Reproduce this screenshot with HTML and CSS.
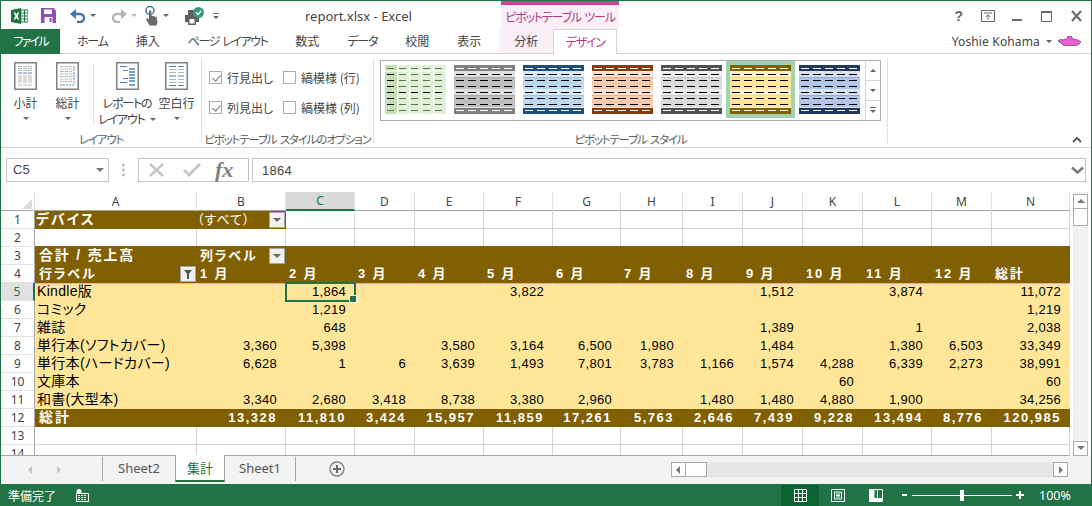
FILE: index.html
```html
<!DOCTYPE html>
<html lang="ja">
<head>
  <meta charset="UTF-8" />
  <title>report.xlsx - Excel</title>
  <link rel="stylesheet" href="styles.css">
</head>
<body>
<div class="window">

  <!-- Title bar -->
  <div class="title-bar">
    <div class="qat">
      <svg class="q-logo" width="17" height="16" viewBox="0 0 17 16"><path d="M0 2l10-2v16L0 14z" fill="#217346"/><path d="M10 2h7v12h-7z" fill="#fff" stroke="#217346"/><path d="M11 5h5M11 8h5M11 11h5M13.500 2v12" stroke="#217346" fill="none"/><path d="M2.500 4.500h2l1 2 1-2h1.800L6.500 8l1.800 3.500H6.400L5.400 9.500l-1 2H2.600L4.500 8z" fill="#fff"/></svg>
      <svg class="q-save" width="15" height="15" viewBox="0 0 15 15"><path d="M0 0h12.500L15 2.500V15H0z" fill="#8f4fb5"/><path d="M3 1.500h8v4.500H3z" fill="#fff"/><path d="M3.500 9h8v6h-8z" fill="#fff"/><path d="M8.500 10h2v4h-2z" fill="#8f4fb5"/></svg>
      <svg class="q-undo" width="16" height="15" viewBox="0 0 16 15"><path d="M2 6h8a4 4 0 0 1 0 8H7" fill="none" stroke="#3f74ac" stroke-width="2.400"/><path d="M6 1v10L0 6z" fill="#3f74ac"/></svg>
      <span class="caret q-c1"></span>
      <svg class="q-redo" width="16" height="15" viewBox="0 0 16 15"><path d="M14 6H6a4 4 0 0 0 0 8h3" fill="none" stroke="#b4b4b4" stroke-width="2.400"/><path d="M10 1v10l6-5z" fill="#b4b4b4"/></svg>
      <span class="caret q-c2 light"></span>
      <svg class="q-touch" width="14" height="20" viewBox="0 0 14 20"><circle cx="5" cy="4.500" r="4" fill="none" stroke="#3f74ac" stroke-width="1.500"/><path d="M4 4.500h2.200v5l5.300 1.500 1 5-1 3.500H4.500L1 13l1-1 2 1.500z" fill="#6a6a6a"/></svg>
      <span class="caret q-c3"></span>
      <svg class="q-print" width="21" height="18" viewBox="0 0 21 18"><path d="M1 8h3V3h8v5h3v7h-3v3H4v-3H1z" fill="#5f5f5f"/><path d="M5.500 12h5v4.500h-5z" fill="#fff"/><circle cx="14.500" cy="5.500" r="5.500" fill="#3b9a7a"/><path d="M12 5.500l2 2 3-3.500" fill="none" stroke="#fff" stroke-width="1.300"/></svg>
      <span class="q-more"></span>
    </div>
    <div class="doc-title">report.xlsx - Excel</div>
    <div class="tool-title kana">ピボットテーブル ツール</div>
    <div class="win-btns">
      <span class="help">?</span>
      <svg class="w-restore" width="14" height="12" viewBox="0 0 14 12"><path d="M.5.500h13v11H.5z" fill="none" stroke="#6a6a6a"/><path d="M3 3h8" stroke="#6a6a6a"/><path d="M7 10V5M4.800 7L7 4.700 9.200 7" fill="none" stroke="#6a6a6a"/></svg>
      <svg width="10" height="12" viewBox="0 0 10 12"><path d="M0 9h10v2H0z" fill="#6a6a6a"/></svg>
      <svg width="11" height="12" viewBox="0 0 11 12"><path d="M.5 1.500h10v10H.5z" fill="none" stroke="#6a6a6a"/><path d="M0 1h11v2H0z" fill="#6a6a6a"/></svg>
      <svg width="11" height="12" viewBox="0 0 11 12"><path d="M1 1l9 10M10 1L1 11" stroke="#6a6a6a" stroke-width="2" fill="none"/></svg>
    </div>
  </div>

  <!-- Tabs -->
  <div class="tab-bar">
    <div class="tab file">ファイル</div>
    <div class="tab first kana">ホーム</div>
    <div class="tab">挿入</div>
    <div class="tab kana page-tab">ページ レイアウト</div>
    <div class="tab">数式</div>
    <div class="tab kana">データ</div>
    <div class="tab">校閲</div>
    <div class="tab">表示</div>
    <div class="tool-tabs">
      <div class="tab tool">分析</div>
      <div class="tab design kana">デザイン</div>
    </div>
    <div class="account">
      <span class="acct-name">Yoshie Kohama</span>
      <span class="caret"></span>
      <svg width="23" height="10" viewBox="0 0 23 10"><path d="M0 5l3-2 1 1 5-1 1-3h3l2 3 5 1 3 2-3 3-5 1H6L3 7z" fill="#e85fd8" stroke="#333" stroke-width=".6"/></svg>
    </div>
  </div>

  <!-- Ribbon -->
  <div class="ribbon">
    <div class="group g-layout">
      <div class="group-body">
        <div class="rb-btn w-a">
          <svg class="rb-icon" width="23" height="28" viewBox="0 0 23 28"><use href="#frame"/><path d="M4 4.500h15M4 6.500h15M4 8.500h15" stroke="#b5b5b5" stroke-dasharray="4 1" fill="none"/><path d="M4 11h15" stroke="#4a83c0" stroke-dasharray="4 1" fill="none"/><path d="M4 14h15M4 16h15M4 18h15M4 20h15M4 23h15" stroke="#b5b5b5" stroke-dasharray="4 1" fill="none"/></svg>
          <span class="rb-label">小計</span><span class="caret"></span>
        </div>
        <div class="rb-btn w-b">
          <svg class="rb-icon" width="23" height="28" viewBox="0 0 23 28"><use href="#frame"/><path d="M4 4.500h12M4 7h12M4 9.500h12M4 12h12M4 14.500h12M4 17h12M4 19.500h12" stroke="#b5b5b5" stroke-dasharray="3.500 1" fill="none"/><path d="M18 4v18M4 23h15" stroke="#4a83c0" stroke-dasharray="2 1" fill="none"/></svg>
          <span class="rb-label">総計</span><span class="caret"></span>
        </div>
        <div class="rb-sep"></div>
        <div class="rb-btn w-c">
          <svg class="rb-icon" width="23" height="28" viewBox="0 0 23 28"><use href="#frame"/><path d="M4 4.500h7M7 8.500h5M7 16.500h5M4 20.500h7" stroke="#4a83c0" fill="none"/><path d="M13 7h6M13 10h6M13 13h6M13 16h6M13 19h6M13 23h6" stroke="#4a83c0" stroke-width="1.500" fill="none"/></svg>
          <span class="rb-label kana">レポートの<br>レイアウト<i class="caret inline"></i></span>
        </div>
        <div class="rb-btn w-d">
          <svg class="rb-icon" width="23" height="28" viewBox="0 0 23 28"><use href="#frame"/><path d="M4 4.500h7M13 4.500h6M4 14h7M13 14h6M4 23.500h7M13 23.500h6" stroke="#4a83c0" fill="none"/><path d="M4 7.500h7M13 7.500h6M4 10.500h7M13 10.500h6M4 17.500h7M13 17.500h6M4 20.500h7M13 20.500h6" stroke="#b5b5b5" fill="none"/></svg>
          <span class="rb-label">空白行</span><span class="caret"></span>
        </div>
      </div>
      <div class="group-label kana">レイアウト</div>
    </div>

    <div class="group g-options">
      <div class="group-body">
        <div class="opt-grid">
          <label class="opt"><span class="check on"></span>行見出し</label>
          <label class="opt"><span class="check"></span>縞模様 (行)</label>
          <label class="opt"><span class="check on"></span>列見出し</label>
          <label class="opt"><span class="check"></span>縞模様 (列)</label>
        </div>
      </div>
      <div class="group-label kana">ピボットテーブル スタイルのオプション</div>
    </div>

    <div class="group g-styles">
      <div class="group-body">
        <div class="gallery">
          <div class="swatches">
            <svg class="swatch" width="61" height="49" viewBox="0 0 61 49"><path d="M0 0h61v49H0z" fill="#e2efda"/><path d="M0 0h12v49H0z" fill="#c6e0b4"/><path d="M0 6h61" stroke="#fff" fill="none"/><path d="M12.500 0v49M24.500 0v49M36.500 0v49M48.500 0v49" stroke="#fff" fill="none"/><path d="M2 3.500h58" stroke="#548235" stroke-dasharray="7 5" fill="none"/><path d="M2 9.500h7M2 15.500h7M2 21.500h7M2 27.500h58M2 33.500h7M2 39.500h7" stroke="#000" stroke-dasharray="7 5" fill="none"/><path d="M14 9.500h46M14 15.500h46M14 21.500h46M14 33.500h46M14 39.500h46M2 45.500h58" stroke="#548235" stroke-dasharray="7 5" fill="none"/></svg>
            <svg class="swatch sw-gray" width="61" height="49"><use href="#style"/></svg>
            <svg class="swatch sw-blue" width="61" height="49"><use href="#style"/></svg>
            <svg class="swatch sw-orange" width="61" height="49"><use href="#style"/></svg>
            <svg class="swatch sw-dark" width="61" height="49"><use href="#style"/></svg>
            <svg class="swatch sw-gold picked" width="61" height="49"><use href="#style"/></svg>
            <svg class="swatch sw-navy" width="61" height="49"><use href="#style"/></svg>
          </div>
          <div class="gallery-scroll">
            <span class="up"></span>
            <span class="down"></span>
            <span class="more"></span>
          </div>
        </div>
      </div>
      <div class="group-label kana">ピボットテーブル スタイル</div>
    </div>
    <div class="ribbon-end">
      <svg width="10" height="7" viewBox="0 0 10 7"><path d="M1 6l4-4 4 4" fill="none" stroke="#555" stroke-width="1.800"/></svg>
    </div>
  </div>

  <!-- Formula bar -->
  <div class="formula-bar">
    <div class="name-box">C5<span class="name-arrow"></span></div>
    <div class="dots"></div>
    <div class="fx-box">
      <svg width="15" height="14" viewBox="0 0 15 14"><path d="M1 1l13 12M14 1L1 13" stroke="#c6c6c6" stroke-width="2.400" fill="none"/></svg>
      <svg width="18" height="14" viewBox="0 0 18 14"><path d="M1 7l5 5L17 1" stroke="#c6c6c6" stroke-width="3" fill="none"/></svg>
      <span class="fx">fx</span>
    </div>
    <div class="formula-input">
      <span>1864</span>
      <svg width="13" height="9" viewBox="0 0 13 9"><path d="M1 1.500l5.500 5 5.500-5" fill="none" stroke="#7a7a7a" stroke-width="2.600"/></svg>
    </div>
  </div>

  <!-- Sheet -->
  <div class="sheet-area">
    <div class="grid-wrap">
      <table class="grid">
        <colgroup>
          <col class="c-head"><col class="c-a"><col class="c-b"><col class="c-69"><col class="c-60"><col class="c-69"><col class="c-69"><col class="c-68"><col class="c-62"><col class="c-60"><col class="c-60"><col class="c-60"><col class="c-69"><col class="c-60"><col class="c-n">
        </colgroup>
        <tr class="heads">
          <th class="corner"></th><th>A</th><th>B</th><th class="active">C</th><th>D</th><th>E</th><th>F</th><th>G</th><th>H</th><th>I</th><th>J</th><th>K</th><th>L</th><th>M</th><th>N</th>
        </tr>
        <tr class="filter-row">
          <th>1</th><td class="brown lbl wide">デバイス</td><td class="brown plain">（すべて）<span class="drop"></span></td><td></td><td></td><td></td><td></td><td></td><td></td><td></td><td></td><td></td><td></td><td></td><td></td>
        </tr>
        <tr>
          <th>2</th><td></td><td></td><td></td><td></td><td></td><td></td><td></td><td></td><td></td><td></td><td></td><td></td><td></td><td></td>
        </tr>
        <tr class="head-row">
          <th>3</th><td class="lbl wide">合計 / 売上高</td><td class="lbl">列ラベル<span class="drop"></span></td><td></td><td></td><td></td><td></td><td></td><td></td><td></td><td></td><td></td><td></td><td></td><td></td>
        </tr>
        <tr class="head-row">
          <th>4</th><td class="lbl">行ラベル<span class="drop filtered"></span></td><td class="lbl">1 月</td><td class="lbl">2 月</td><td class="lbl">3 月</td><td class="lbl">4 月</td><td class="lbl">5 月</td><td class="lbl">6 月</td><td class="lbl">7 月</td><td class="lbl">8 月</td><td class="lbl">9 月</td><td class="lbl">10 月</td><td class="lbl">11 月</td><td class="lbl">12 月</td><td class="lbl">総計</td>
        </tr>
        <tr class="data first-data">
          <th class="active">5</th><td>Kindle版</td><td></td><td class="selected">1,864</td><td></td><td></td><td>3,822</td><td></td><td></td><td></td><td>1,512</td><td></td><td>3,874</td><td></td><td>11,072</td>
        </tr>
        <tr class="data">
          <th>6</th><td>コミック</td><td></td><td>1,219</td><td></td><td></td><td></td><td></td><td></td><td></td><td></td><td></td><td></td><td></td><td>1,219</td>
        </tr>
        <tr class="data">
          <th>7</th><td>雑誌</td><td></td><td>648</td><td></td><td></td><td></td><td></td><td></td><td></td><td>1,389</td><td></td><td>1</td><td></td><td>2,038</td>
        </tr>
        <tr class="data">
          <th>8</th><td>単行本(ソフトカバー)</td><td>3,360</td><td>5,398</td><td></td><td>3,580</td><td>3,164</td><td>6,500</td><td>1,980</td><td></td><td>1,484</td><td></td><td>1,380</td><td>6,503</td><td>33,349</td>
        </tr>
        <tr class="data">
          <th>9</th><td>単行本(ハードカバー)</td><td>6,628</td><td>1</td><td>6</td><td>3,639</td><td>1,493</td><td>7,801</td><td>3,783</td><td>1,166</td><td>1,574</td><td>4,288</td><td>6,339</td><td>2,273</td><td>38,991</td>
        </tr>
        <tr class="data">
          <th>10</th><td>文庫本</td><td></td><td></td><td></td><td></td><td></td><td></td><td></td><td></td><td></td><td>60</td><td></td><td></td><td>60</td>
        </tr>
        <tr class="data">
          <th>11</th><td>和書(大型本)</td><td>3,340</td><td>2,680</td><td>3,418</td><td>8,738</td><td>3,380</td><td>2,960</td><td></td><td>1,480</td><td>1,480</td><td>4,880</td><td>1,900</td><td></td><td>34,256</td>
        </tr>
        <tr class="total">
          <th>12</th><td>総計</td><td>13,328</td><td>11,810</td><td>3,424</td><td>15,957</td><td>11,859</td><td>17,261</td><td>5,763</td><td>2,646</td><td>7,439</td><td>9,228</td><td>13,494</td><td>8,776</td><td>120,985</td>
        </tr>
        <tr>
          <th>13</th><td></td><td></td><td></td><td></td><td></td><td></td><td></td><td></td><td></td><td></td><td></td><td></td><td></td><td></td>
        </tr>
        <tr>
          <th>14</th><td></td><td></td><td></td><td></td><td></td><td></td><td></td><td></td><td></td><td></td><td></td><td></td><td></td><td></td>
        </tr>
      </table>
    </div>
    <div class="v-scroll">
      <span class="sb-btn arrow-up"></span>
      <span class="sb-thumb"></span>
      <span class="sb-track"></span>
      <span class="sb-btn arrow-down"></span>
    </div>
  </div>

  <!-- Sheet tabs -->
  <div class="sheet-tabs">
    <div class="tab-nav"><span class="nav-l"></span><span class="nav-r"></span></div>
    <div class="stab">Sheet2</div>
    <div class="stab on">集計</div>
    <div class="stab last">Sheet1</div>
    <svg class="add-sheet" width="16" height="16" viewBox="0 0 16 16"><circle cx="8" cy="8" r="7" fill="none" stroke="#7f7f7f" stroke-width="1.300"/><path d="M8 4v8M4 8h8" stroke="#6a6a6a" stroke-width="2"/></svg>
    <div class="h-scroll">
      <span class="sb-btn arrow-left"></span>
      <span class="sb-thumb"></span>
      <span class="sb-track"></span>
      <span class="sb-btn arrow-right"></span>
    </div>
  </div>

  <!-- Status bar -->
  <div class="status-bar">
    <span class="ready">準備完了</span>
    <svg class="macro" width="13" height="13" viewBox="0 0 13 13"><circle cx="3" cy="2.500" r="2.500" fill="#fff"/><path d="M.5 4.500h12v8H.5z" fill="none" stroke="#fff"/><path d="M2 6.500h9M2 8.500h9M2 10.500h9" stroke="#fff" stroke-dasharray="2 1"/></svg>
    <div class="view-btns">
      <span class="view on"><svg width="13" height="13" viewBox="0 0 13 13"><path d="M.5.500h12v12H.5zM.5 4.500h12M.5 8.500h12M4.500.500v12M8.500.500v12" fill="none" stroke="#fff"/></svg></span>
      <span class="view"><svg width="14" height="13" viewBox="0 0 14 13"><path d="M.5.500h13v12H.5z" fill="none" stroke="#fff"/><path d="M3.500 3h7v7h-7zM5 5h4M5 6.500h4M5 8h4" fill="none" stroke="#fff"/></svg></span>
      <span class="view"><svg width="14" height="13" viewBox="0 0 14 13"><path d="M.5.500h13v12H.5z" fill="none" stroke="#fff"/><path d="M1 1h4.500v8H8V1h1v8h4v3H1z" fill="#fff"/></svg></span>
    </div>
    <div class="zoom">
      <span class="z-minus"></span>
      <span class="z-slider"><i></i></span>
      <span class="z-plus"></span>
      <span class="z-val">100%</span>
    </div>
  </div>
</div>

<!-- shared drawings -->
<svg class="defs" width="0" height="0">
  <symbol id="frame" viewBox="0 0 23 28">
    <path d="M.75.750h21.500v26.500H.75z" fill="#fff" stroke="#808080" stroke-width="1.500"/>
  </symbol>
  <symbol id="style" viewBox="0 0 61 49">
    <path class="s-light" d="M0 0h61v49H0z"/>
    <path class="s-band" d="M0 12h61v12H0zM0 30h61v12H0z"/>
    <path class="s-line" d="M0 12h61v1H0zM0 30h61v1H0z"/>
    <path class="s-head" d="M0 0h61v6H0zM0 43h61v6H0z"/>
    <path d="M2 3.500h58M2 45.500h58" stroke="#fff" stroke-dasharray="8 4" fill="none"/>
    <path d="M2 9.500h58M2 15.500h58M2 21.500h58M2 27.500h58M2 33.500h58M2 39.500h58" stroke="#000" stroke-dasharray="8 4" fill="none"/>
  </symbol>
</svg>
</body>
</html>
```

FILE: styles.css
```css
/* Base */
* {
  box-sizing: border-box;
}
body {
  margin: 0;
  background: #fff;
  font-family: "Noto Sans CJK JP", "Noto Sans", sans-serif;
  font-size: 12px;
  color: #444;
  font-feature-settings: "palt";
}
.window {
  width: 1092px;
  height: 506px;
  border: 1px solid #217346;
  border-bottom: 0;
  display: flex;
  flex-direction: column;
  overflow: hidden;
}
.defs {
  position: absolute;
}
svg {
  display: block;
  flex: none;
}
/* Office squeezes katakana harder than palt does */
.kana {
  letter-spacing: -1.200px;
  word-spacing: 2px;
}
.kana.page-tab {
  letter-spacing: -1.450px;
}
.caret {
  display: inline-block;
  width: 0;
  height: 0;
  border-left: 3px solid transparent;
  border-right: 3px solid transparent;
  border-top: 3px solid #666;
}
.caret.light {
  border-top-color: #b9b9b9;
}

/* Title bar */
.title-bar {
  height: 28px;
  display: flex;
  flex: none;
}
.qat {
  width: 304px;
  display: flex;
  align-items: center;
  padding: 1px 0 0 10px;
}
.q-save { margin-left: 13px; }
.q-undo { margin-left: 14px; }
.q-c1 { margin-left: 4px; }
.q-redo { margin-left: 15px; }
.q-c2 { margin-left: 4px; }
.q-touch { margin-left: 8px; }
.q-c3 { margin-left: 4px; }
.q-print { margin-left: 15px; }
.q-more {
  margin-left: 8px;
  width: 6px;
  height: 6px;
  border-top: 1px solid #666;
  position: relative;
}
.q-more::after {
  content: "";
  position: absolute;
  top: 2px;
  left: 0;
  border-left: 3px solid transparent;
  border-right: 3px solid transparent;
  border-top: 3px solid #666;
}
.doc-title {
  width: 196px;
  font-family: "Noto Sans", sans-serif;
  font-size: 13px;
  line-height: 30px;
  color: #444;
}
.tool-title {
  width: 118px;
  border-top: 4px solid #c8468f;
  background: #faeff6;
  color: #b23a85;
  font-size: 12px;
  line-height: 24px;
  text-align: center;
  white-space: nowrap;
}
.win-btns {
  flex: 1;
  display: flex;
  align-items: center;
  justify-content: flex-end;
  gap: 19px;
  padding: 2px 9px 0 0;
}
.w-restore {
  margin-right: -2px;
}
.help {
  font-family: "Liberation Sans", sans-serif;
  font-weight: bold;
  font-size: 14px;
  color: #666;
  margin-right: -1px;
}

/* Tabs */
.tab-bar {
  height: 25px;
  display: flex;
  flex: none;
  border-bottom: 1px solid #d4d4d4;
}
.tab {
  padding: 0 14px;
  line-height: 24px;
  font-size: 12px;
  white-space: nowrap;
}
.tab.file {
  width: 59px;
  padding: 0;
  text-align: center;
  background: #217346;
  color: #fff;
  height: 25px;
  letter-spacing: -1.800px;
}
.tab.first {
  margin-left: 3px;
}
.tool-tabs {
  display: flex;
  margin-left: 4px;
  background: #faeff6;
  height: 24px;
}
.tab.tool {
  width: 54px;
  padding: 0;
  text-align: center;
}
.tab.design {
  width: 64px;
  height: 25px;
  padding: 0;
  text-align: center;
  background: #fff;
  border: 1px solid #d4d4d4;
  border-bottom: 0;
  color: #b23a85;
}
.account {
  flex: 1;
  display: flex;
  align-items: center;
  justify-content: flex-end;
  gap: 6px;
  padding-right: 10px;
  font-family: "Noto Sans", sans-serif;
  font-size: 12px;
}
.acct-name {
  letter-spacing: .15px;
}

/* Ribbon */
.ribbon {
  height: 94px;
  display: flex;
  flex: none;
  border-bottom: 1px solid #d4d4d4;
}
.group {
  display: flex;
  flex-direction: column;
  margin: 4px 0;
  border-right: 1px solid #e1e1e1;
}
.group-body {
  flex: 1;
  display: flex;
}
.group-label {
  height: 14px;
  text-align: center;
  font-size: 11.500px;
  line-height: 20px;
  color: #5c5c5c;
  white-space: nowrap;
}
.g-layout {
  width: 201px;
}
.g-options {
  width: 172px;
}
.g-styles {
  width: 514px;
}
.rb-btn {
  display: flex;
  flex-direction: column;
  align-items: center;
  padding-top: 4px;
  font-size: 12px;
}
.rb-icon {
  margin-bottom: 5px;
}
.rb-label {
  text-align: center;
  line-height: 16px;
  white-space: nowrap;
}
.rb-btn > .caret {
  margin-top: 6px;
}
.caret.inline {
  margin: 0 0 2px 5px;
  vertical-align: middle;
}
.w-a { width: 49px; }
.w-b { width: 35px; }
.w-c { width: 66px; }
.w-d { width: 33px; }
.rb-sep {
  width: 1px;
  margin: 6px 0 5px 8px;
  background: #e1e1e1;
}
.opt-grid {
  display: grid;
  grid-template-columns: 74px auto;
  grid-auto-rows: 30px;
  padding: 4px 0 0 7px;
  white-space: nowrap;
}
.opt {
  display: flex;
  align-items: center;
  gap: 4px;
}
.check {
  width: 13px;
  height: 13px;
  border: 1px solid #ababab;
  background: #fff;
  position: relative;
  margin-right: 1px;
}
.check.on::after {
  content: "";
  position: absolute;
  left: 4px;
  top: 1px;
  width: 4px;
  height: 7px;
  border-right: 1px solid #777;
  border-bottom: 1px solid #777;
  transform: rotate(40deg);
}
.gallery {
  margin: 2px 0 0 6px;
  width: 501px;
  height: 61px;
  border: 1px solid #ababab;
  display: flex;
}
.swatches {
  flex: 1;
  display: flex;
  gap: 8px;
  padding: 4px 0 0 4px;
}
.swatch.picked {
  outline: 4px solid #a0d4ae;
  box-shadow: 0 0 0 4px #a0d4ae;
  background: #a0d4ae;
}
.s-light { fill: var(--light); }
.s-band { fill: var(--band); }
.s-line { fill: var(--line); }
.s-head { fill: var(--head); }
.sw-gray { --light: #e0e0e0; --band: #bfbfbf; --line: #a6a6a6; --head: #808080; }
.sw-blue { --light: #ddebf7; --band: #bdd7ee; --line: #9bc2e6; --head: #1f4e78; }
.sw-orange { --light: #fce4d6; --band: #f8cbad; --line: #f4b084; --head: #833c0c; }
.sw-dark { --light: #ededed; --band: #dbdbdb; --line: #c9c9c9; --head: #525252; }
.sw-gold { --light: #fff2cc; --band: #ffe699; --line: #ffd966; --head: #806000; }
.sw-navy { --light: #d9e1f2; --band: #b4c6e7; --line: #8ea9db; --head: #203764; }
.gallery-scroll {
  width: 15px;
  border-left: 1px solid #d4d4d4;
  display: flex;
  flex-direction: column;
}
.gallery-scroll span {
  flex: 1;
  position: relative;
  border-bottom: 1px solid #d4d4d4;
}
.gallery-scroll span:last-child {
  border-bottom: 0;
}
.gallery-scroll span::after {
  content: "";
  position: absolute;
  left: 4px;
  top: 8px;
  border-left: 3px solid transparent;
  border-right: 3px solid transparent;
  border-top: 3px solid #666;
}
.gallery-scroll .up::after {
  border-top: 0;
  border-bottom: 3px solid #666;
}
.gallery-scroll .more::after {
  top: 9px;
}
.gallery-scroll .more::before {
  content: "";
  position: absolute;
  left: 4px;
  top: 6px;
  width: 6px;
  height: 1px;
  background: #666;
}
.ribbon-end {
  flex: 1;
  display: flex;
  justify-content: flex-end;
  align-items: flex-end;
  padding: 0 9px 4px 0;
}

/* Formula bar */
.formula-bar {
  height: 44px;
  display: flex;
  flex: none;
  padding: 10px 5px 10px 5px;
  align-items: stretch;
}
.name-box,
.fx-box,
.formula-input {
  border: 1px solid #c6c6c6;
  height: 24px;
}
.name-box {
  width: 103px;
  font-family: "Liberation Sans", sans-serif;
  font-size: 13px;
  line-height: 22px;
  padding-left: 6px;
  position: relative;
}
.name-arrow {
  position: absolute;
  right: 4px;
  top: 9px;
  border-left: 4px solid transparent;
  border-right: 4px solid transparent;
  border-top: 4px solid #777;
}
.dots {
  width: 29px;
  background: radial-gradient(circle, #aaa 1px, transparent 1.200px) center / 3px 5px repeat-y;
  margin: 5px 0;
  background-size: 3px 5px;
}
.fx-box {
  width: 111px;
  display: flex;
  align-items: center;
  padding-left: 10px;
  gap: 19px;
}
.fx {
  font-family: "Liberation Serif", serif;
  font-style: italic;
  font-weight: bold;
  font-size: 22px;
  color: #808080;
  margin-left: -5px;
  line-height: 20px;
}
.formula-input {
  flex: 1;
  margin-left: 3px;
  display: flex;
  align-items: center;
  justify-content: space-between;
  padding: 0 1px 0 9px;
  font-family: "Liberation Sans", sans-serif;
  font-size: 13px;
  letter-spacing: .3px;
}

/* Sheet */
.sheet-area {
  height: 264px;
  display: flex;
  flex: none;
}
.grid-wrap {
  width: 1069px;
  height: 264px;
  overflow: hidden;
  border-bottom: 1px solid #a6a6a6;
}
.grid {
  table-layout: fixed;
  width: 1068px;
  border-collapse: separate;
  border-spacing: 0;
  font-family: "Liberation Sans", "Noto Sans CJK JP", sans-serif;
  font-size: 13px;
  color: #000;
}
.c-head { width: 34px; }
.c-a { width: 162px; }
.c-b { width: 89px; }
.c-69 { width: 69px; }
.c-68 { width: 68px; }
.c-62 { width: 62px; }
.c-60 { width: 60px; }
.c-n { width: 78px; }
.grid tr {
  height: 18px;
}
.grid th,
.grid td {
  height: 18px;
  padding: 0;
  font-weight: normal;
  white-space: nowrap;
  overflow: visible;
  border-right: 1px solid #d4d4d4;
  border-bottom: 1px solid #d4d4d4;
  line-height: 17px;
}
.grid th {
  color: #444;
  font-family: "Noto Sans", sans-serif;
  font-size: 12px;
  text-align: center;
  border-right: 1px solid #a6a6a6;
  background: #fff;
}
.heads th {
  border-right: 1px solid #e1e1e1;
  border-bottom: 1px solid #a6a6a6;
  height: 18px;
}
.heads th.corner {
  position: relative;
}
.heads th.corner::after {
  content: "";
  position: absolute;
  right: 2px;
  bottom: 1px;
  border-left: 10px solid transparent;
  border-bottom: 10px solid #dcdcdc;
}
.heads th.active {
  background: #d9d9d9;
  color: #217346;
  border-bottom: 2px solid #217346;
}
.grid tr > th:first-child {
  border-bottom-color: #e1e1e1;
}
.grid tr.heads > th:first-child {
  border-bottom-color: #a6a6a6;
}
.data th.active {
  background: #e1e1e1;
  color: #217346;
  border-right: 2px solid #217346;
}
.grid td.brown,
.head-row td,
.total td {
  background: #806000;
  border-color: #806000;
  color: #fff;
}
.head-row td {
  box-shadow: 0 -1px 0 #806000;
}
.grid td.lbl {
  font-weight: bold;
  letter-spacing: 1.800px;
  padding-left: 3px;
  position: relative;
}
.grid td.lbl.wide {
  font-size: 14px;
}
.filter-row td.lbl {
  padding-left: 1px;
}
.head-row td:nth-child(2) {
  padding-left: 4px;
}
.grid td.plain {
  font-weight: normal;
  letter-spacing: 1px;
  position: relative;
}
.drop {
  position: absolute;
  right: 0;
  top: 1px;
  width: 16px;
  height: 16px;
  background: #f1f1f1;
  border: 1px solid #a6a6a6;
}
.drop::after {
  content: "";
  position: absolute;
  left: 3px;
  top: 5px;
  border-left: 4px solid transparent;
  border-right: 4px solid transparent;
  border-top: 4px solid #666;
}
.drop.filtered::after {
  left: 3px;
  top: 3px;
  border-top: 5px solid #555;
}
.drop.filtered::before {
  content: "";
  position: absolute;
  left: 6px;
  top: 6px;
  width: 2px;
  height: 6px;
  background: #555;
}
.data td {
  background: #ffe699;
  border-color: #ffe699;
  text-align: right;
  padding-right: 8px;
  letter-spacing: .3px;
}
.data td:nth-child(2) {
  text-align: left;
  padding-left: 2px;
  font-size: 14px;
}
.first-data td {
  box-shadow: inset 0 1px 0 #ffc000;
}
.data td.selected {
  position: relative;
  outline: 2px solid #217346;
  outline-offset: -1px;
  z-index: 1;
}
.data td.selected::after {
  content: "";
  position: absolute;
  right: -3px;
  bottom: -3px;
  width: 6px;
  height: 6px;
  background: #217346;
  border: 1px solid #fff;
}
.total td {
  font-weight: bold;
  text-align: right;
  padding-right: 8px;
  letter-spacing: 1.500px;
}
.total td:nth-child(2) {
  text-align: left;
  padding-left: 4px;
  font-size: 14px;
  letter-spacing: 2px;
}

/* Scrollbars */
.v-scroll {
  width: 21px;
  padding: 2px 2px 0 3px;
  display: flex;
  flex-direction: column;
  background: linear-gradient(90deg, #fff 3px, #f0f0f0 3px, #f0f0f0 18px, #fff 18px);
}
.sb-btn {
  display: block;
  flex: none;
  width: 15px;
  height: 15px;
  background: #fff;
  border: 1px solid #ababab;
  position: relative;
}
.sb-btn::after {
  content: "";
  position: absolute;
  left: 3px;
  top: 4px;
}
.arrow-up::after {
  border-left: 4px solid transparent;
  border-right: 4px solid transparent;
  border-bottom: 4px solid #777;
}
.arrow-down::after {
  border-left: 4px solid transparent;
  border-right: 4px solid transparent;
  border-top: 4px solid #777;
}
.arrow-left::after {
  left: 4px;
  top: 3px;
  border-top: 4px solid transparent;
  border-bottom: 4px solid transparent;
  border-right: 4px solid #777;
}
.arrow-right::after {
  left: 5px;
  top: 3px;
  border-top: 4px solid transparent;
  border-bottom: 4px solid transparent;
  border-left: 4px solid #777;
}
.v-scroll .sb-thumb {
  width: 15px;
  height: 17px;
  background: #fff;
  border: 1px solid #ababab;
  border-top: 0;
}
.v-scroll .sb-track {
  flex: 1;
}

/* Sheet tabs */
.sheet-tabs {
  height: 28px;
  flex: none;
  display: flex;
  background: #f3f3f3;
  font-size: 13px;
}
.tab-nav {
  width: 101px;
  position: relative;
}
.tab-nav span {
  position: absolute;
  top: 10px;
  border-top: 4px solid transparent;
  border-bottom: 4px solid transparent;
}
.nav-l {
  left: 27px;
  border-right: 4px solid #c4c4c4;
}
.nav-r {
  left: 56px;
  border-left: 4px solid #c4c4c4;
}
.stab {
  height: 24px;
  line-height: 23px;
  font-family: "Noto Sans", "Noto Sans CJK JP", sans-serif;
  padding: 0 14px;
  margin-top: 1px;
  border-left: 1px solid #a6a6a6;
  width: 73px;
  text-align: center;
  color: #555;
}
.stab.on {
  margin-top: -1px;
  height: 27px;
  width: 50px;
  padding: 0;
  line-height: 27px;
  background: #fff;
  color: #217346;
  border-left: 1px solid #a6a6a6;
  border-right: 1px solid #a6a6a6;
  border-bottom: 2px solid #217346;
}
.stab + .stab.last {
  border-left: 0;
  width: 71px;
  padding: 0;
  border-right: 1px solid #a6a6a6;
}
.add-sheet {
  margin: 5px 0 0 33px;
}
.h-scroll {
  display: flex;
  margin: 6px 0 0 326px;
  width: 397px;
  height: 15px;
  background: #e6e6e6;
}
.h-scroll .sb-thumb {
  width: 21px;
  background: #fff;
  border: 1px solid #ababab;
  border-left: 0;
  flex: none;
}
.h-scroll .sb-track {
  flex: 1;
}

/* Status bar */
.status-bar {
  flex: 1;
  background: #217346;
  color: #fff;
  display: flex;
  align-items: center;
  padding-left: 7px;
  font-size: 12px;
}
.macro {
  margin-left: 20px;
}
.view-btns {
  margin-left: 692px;
  display: flex;
  height: 21px;
}
.view {
  width: 38px;
  display: flex;
  align-items: center;
  justify-content: center;
}
.view.on {
  background: #0a6332;
}
.zoom {
  margin-left: 7px;
  display: flex;
  align-items: center;
}
.z-minus {
  width: 5px;
  height: 2px;
  background: #fff;
}
.z-slider {
  width: 100px;
  height: 1px;
  background: #fff;
  margin-left: 5px;
  position: relative;
}
.z-slider i {
  position: absolute;
  left: 48px;
  top: -5px;
  width: 4px;
  height: 11px;
  background: #fff;
}
.z-plus {
  width: 8px;
  height: 8px;
  margin-left: 4px;
  background: linear-gradient(#fff, #fff) center / 8px 2px no-repeat, linear-gradient(#fff, #fff) center / 2px 8px no-repeat;
}
.z-val {
  margin-left: 15px;
  font-family: "Noto Sans", sans-serif;
  font-size: 12.500px;
}
```
